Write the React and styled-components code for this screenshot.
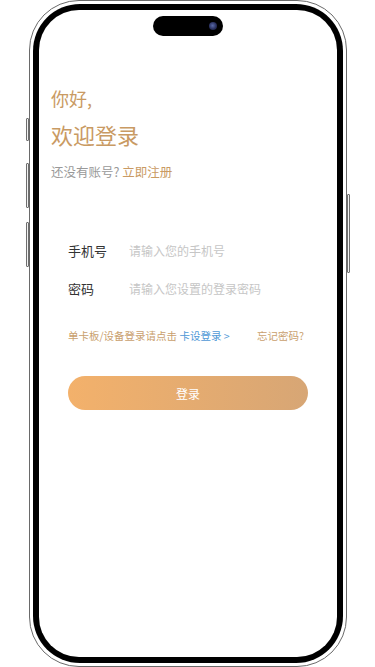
import React from "react";
import styled, { createGlobalStyle } from "styled-components";

const GlobalStyle = createGlobalStyle`
  html, body {
    margin: 0;
    padding: 0;
    background: #ffffff;
  }
  body {
    font-family: "Noto Sans CJK SC", "Noto Sans", sans-serif;
  }
  * {
    box-sizing: border-box;
  }
`;

function App() {
  return (
    <>
      <GlobalStyle />
      <Page>
        <Phone>
          <SideKey side="left" top={118} size={23} />
          <SideKey side="left" top={163} size={45} />
          <SideKey side="left" top={222} size={45} />
          <SideKey side="right" top={194} size={79} />
          <Bezel>
            <Screen>
              <Island>
                <Camera />
              </Island>
              <Intro>
                <Hello>你好,</Hello>
                <Welcome>欢迎登录</Welcome>
                <Register>
                  还没有账号? <span>立即注册</span>
                </Register>
              </Intro>
              <Form>
                <Field>
                  <Label>手机号</Label>
                  <Input type="text" placeholder="请输入您的手机号" />
                </Field>
                <Field>
                  <Label>密码</Label>
                  <Input type="password" placeholder="请输入您设置的登录密码" />
                </Field>
                <LinkRow>
                  <Hint>
                    单卡板/设备登录请点击 <BlueLink>卡设登录 &gt;</BlueLink>
                  </Hint>
                  <Hint>忘记密码?</Hint>
                </LinkRow>
                <LoginButton type="button">登录</LoginButton>
              </Form>
            </Screen>
          </Bezel>
        </Phone>
      </Page>
    </>
  );
}

export default App;

const Page = styled.div`
  width: 375px;
  height: 667px;
  display: flex;
  justify-content: center;
  overflow: hidden;
`;

const Phone = styled.div`
  position: relative;
  width: 318px;
  height: 667px;
  margin-left: 1px;
  border: 1px solid #6a6a6a;
  border-radius: 50px;
  padding: 3px;
  background: #ffffff;
`;

const SideKey = styled.div`
  position: absolute;
  top: ${(p) => p.top - 1}px;
  ${(p) => (p.side === "left" ? "left: -4px;" : "right: -4px;")}
  width: 3px;
  height: ${(p) => p.size}px;
  border: 1px solid #6e6e6e;
  background: #f2f2f2;
  border-radius: 1px;
`;

const Bezel = styled.div`
  width: 100%;
  height: 100%;
  background: #000000;
  border-radius: 47px;
  padding: 6px;
`;

const Screen = styled.div`
  width: 100%;
  height: 100%;
  background: #ffffff;
  border-radius: 40px;
  overflow: hidden;
  display: flex;
  flex-direction: column;
`;

const Island = styled.div`
  align-self: center;
  width: 70px;
  height: 20px;
  margin-top: 6px;
  background: #000000;
  border-radius: 10px;
  display: flex;
  align-items: center;
  justify-content: flex-end;
  padding-right: 6px;
`;

const Camera = styled.div`
  width: 8px;
  height: 8px;
  border-radius: 50%;
  background: radial-gradient(circle at 45% 45%, #5a6aa8 0%, #2a3160 55%, #12142a 100%);
`;

const Intro = styled.div`
  padding-left: 12px;
  margin-top: 50px;
  display: flex;
  flex-direction: column;
`;

const Hello = styled.div`
  font-size: 18px;
  line-height: 24px;
  color: #c99a63;
`;

const Welcome = styled.div`
  margin-top: 9px;
  font-size: 22px;
  line-height: 30px;
  color: #c99a63;
`;

const Register = styled.div`
  margin-top: 14px;
  font-size: 12.5px;
  line-height: 18px;
  color: #999999;

  span {
    color: #c99a63;
  }
`;

const Form = styled.div`
  margin-top: 50px;
  padding: 0 29px;
  display: flex;
  flex-direction: column;
`;

const Field = styled.div`
  height: 38px;
  display: flex;
  align-items: center;
`;

const Label = styled.div`
  width: 61px;
  flex-shrink: 0;
  font-size: 13px;
  color: #333333;
`;

const Input = styled.input`
  flex: 1;
  min-width: 0;
  border: none;
  outline: none;
  padding: 0;
  background: transparent;
  font-family: inherit;
  font-size: 12px;
  color: #333333;

  &::placeholder {
    color: #c6c6c6;
  }
`;

const LinkRow = styled.div`
  margin-top: 20px;
  height: 16px;
  display: flex;
  align-items: center;
  justify-content: space-between;
  padding-right: 4px;
`;

const Hint = styled.div`
  font-size: 10.5px;
  color: #c9a06d;
  white-space: nowrap;
`;

const BlueLink = styled.span`
  color: #4f98d6;
`;

const LoginButton = styled.button`
  margin-top: 33px;
  width: 240px;
  height: 34px;
  border: none;
  border-radius: 17px;
  background: linear-gradient(90deg, #f3b16b 0%, #d7a675 100%);
  color: #ffffff;
  font-family: inherit;
  font-size: 12px;
  cursor: pointer;
`;
